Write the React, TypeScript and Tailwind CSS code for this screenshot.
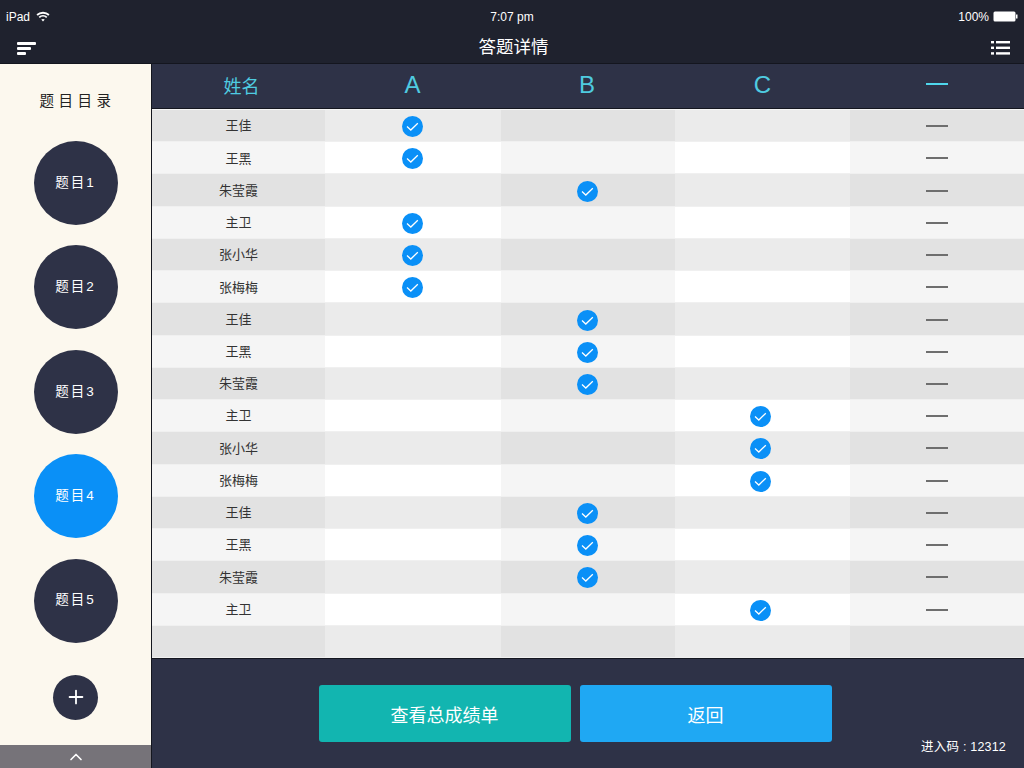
import { ChevronUp, Plus } from 'lucide-react';

const font = "[font-family:'Liberation_Sans','Noto_Sans_CJK_SC',sans-serif]";

// col: index of the answered column, 0 = A, 1 = B, 2 = C
const rows = [
  { name: '王佳', col: 0 },
  { name: '王黑', col: 0 },
  { name: '朱莹霞', col: 1 },
  { name: '主卫', col: 0 },
  { name: '张小华', col: 0 },
  { name: '张梅梅', col: 0 },
  { name: '王佳', col: 1 },
  { name: '王黑', col: 1 },
  { name: '朱莹霞', col: 1 },
  { name: '主卫', col: 2 },
  { name: '张小华', col: 2 },
  { name: '张梅梅', col: 2 },
  { name: '王佳', col: 1 },
  { name: '王黑', col: 1 },
  { name: '朱莹霞', col: 1 },
  { name: '主卫', col: 2 },
  { name: '', col: -1 },
];

const topics = ['题目1', '题目2', '题目3', '题目4', '题目5'];

function Check() {
  return (
    <svg width="21" height="21" viewBox="0 0 21 21">
      <circle cx="10.5" cy="10.5" r="10.5" fill="#0a90f7" />
      <path d="M5 10.6 L8.8 14 L15.8 7.2" fill="none" stroke="#fff" strokeWidth="1.3" />
    </svg>
  );
}

function Row({ name, col, index }: { name: string; col: number; index: number }) {
  const odd = index % 2 === 0;
  const dark = odd ? 'bg-[#e2e2e2]' : 'bg-[#f5f5f5]';
  const light = odd ? 'bg-[#ebebeb]' : 'bg-white';
  const base = 'flex items-center justify-center';
  return (
    <div className="grid grid-cols-[173px_176px_174px_175px_174px] border-b border-[#f0f0f0]">
      <div className={`${base} ${dark} pt-[1px] text-[13px] text-[#333333]`}>{name}</div>
      <div className={`${base} ${light} pt-[2px] pr-[2px]`}>{col === 0 && <Check />}</div>
      <div className={`${base} ${dark} pt-[2px] pr-[2px]`}>{col === 1 && <Check />}</div>
      <div className={`${base} ${light} pt-[2px] pr-[5px]`}>{col === 2 && <Check />}</div>
      <div className={`${base} ${dark} pt-[1px]`}>
        {name && <div className="h-[2px] w-[22px] bg-[#6e6e6e]" />}
      </div>
    </div>
  );
}

export default function App() {
  return (
    <div className={`flex h-[768px] w-[1024px] flex-col overflow-hidden bg-[#1f222e] ${font}`}>
      {/* Status bar */}
      <div className="grid h-[33px] grid-cols-3 items-center px-[6px] text-[12px] text-white">
        <div className="flex items-center gap-[6px]">
          <span>iPad</span>
          <svg width="14" height="11" viewBox="0 0 13 10" fill="none" stroke="#fff" strokeWidth="1.7">
            <path d="M1 3.6 C4 0.8 9 0.8 12 3.6" />
            <path d="M3 5.8 C5 4 8 4 10 5.8" />
            <path d="M6.5 9.6 L4.9 7.8 C5.8 7.1 7.2 7.1 8.1 7.8 Z" fill="#fff" stroke="none" />
          </svg>
        </div>
        <div className="text-center">7:07 pm</div>
        <div className="flex items-center justify-end gap-[4px]">
          <span>100%</span>
          <svg width="25" height="11" viewBox="0 0 25 11">
            <rect x="0.5" y="0.5" width="22" height="10" rx="1.5" fill="#fff" />
            <rect x="23" y="3.5" width="1.5" height="4" fill="#fff" />
          </svg>
        </div>
      </div>

      {/* Title bar */}
      <div className="flex h-[31px] items-start justify-between border-b border-[#14161f] pl-[17px] pr-[14px] text-white">
        <svg width="19" height="13" viewBox="0 0 19 13" fill="#fff" className="mt-[9px]">
          <rect x="0" y="0" width="19" height="3" rx="1" />
          <rect x="0" y="5" width="14" height="3" rx="1" />
          <rect x="0" y="10" width="9" height="3" rx="1" />
        </svg>
        <div className="text-[17.5px] leading-[28px]">答题详情</div>
        <svg width="19" height="14" viewBox="0 0 19 14" fill="#fff" className="mt-[8px]">
          <rect x="0" y="0" width="3" height="2.4" />
          <rect x="5" y="0" width="14" height="2.4" />
          <rect x="0" y="5.6" width="3" height="2.4" />
          <rect x="5" y="5.6" width="14" height="2.4" />
          <rect x="0" y="11.2" width="3" height="2.4" />
          <rect x="5" y="11.2" width="14" height="2.4" />
        </svg>
      </div>

      <div className="flex h-[704px]">
        {/* Sidebar */}
        <div className="flex w-[152px] flex-col items-center border-r border-[#14161f] bg-[#fcf8ee]">
          <div className="mt-[26px] mb-[29px] pl-[4px] text-[14.5px] leading-[22px] tracking-[4.5px] text-[#222222]">题目目录</div>
          <div className="flex flex-col gap-[20.4px]">
            {topics.map((t, i) => (
              <div
                key={t}
                className={`flex h-[84px] w-[84px] items-center justify-center rounded-full text-[13.5px] tracking-[2px] text-white ${
                  i === 3 ? 'bg-[#0a90f7]' : 'bg-[#2e3247]'
                }`}
              >
                {t}
              </div>
            ))}
          </div>
          <div className="mt-[32px] flex h-[45px] w-[45px] items-center justify-center rounded-full bg-[#2e3247]">
            <Plus size={22} color="#fff" strokeWidth={1.8} absoluteStrokeWidth />
          </div>
          <div className="mt-auto flex h-[23px] w-full items-center justify-center bg-[#767379]">
            <ChevronUp size={20} color="#fff" strokeWidth={2} />
          </div>
        </div>

        {/* Main */}
        <div className="flex w-[872px] flex-col">
          <div className="grid h-[45px] grid-cols-[173px_176px_174px_175px_174px] items-center border-b border-[#14161f] bg-[#2e3247] text-center text-[#4fcbe0]">
            <div className="pt-[2px] pl-[6px] text-[18px]">姓名</div>
            <div className="pr-[1px] pb-[3px] text-[24px] leading-[36px]">A</div>
            <div className="pr-[2px] pb-[3px] text-[24px] leading-[36px]">B</div>
            <div className="pb-[3px] text-[24px] leading-[36px]">C</div>
            <div className="flex justify-center pb-[4px]"><div className="h-[2px] w-[22px] bg-[#4fd6ec]" /></div>
          </div>
          <div className="grid h-[549px] grid-rows-[repeat(17,1fr)] border-t border-[#f5f5f5]">
            {rows.map((r, i) => (
              <Row key={i} name={r.name} col={r.col} index={i} />
            ))}
          </div>
          <div className="relative flex h-[110px] items-start justify-center gap-[9px] border-t border-[#14161f] bg-[#2e3247] pt-[26px] pr-[26px] text-[18px] leading-[63px] text-white">
            <button className="h-[57px] w-[252px] rounded-[3px] bg-[#12b5b0]">查看总成绩单</button>
            <button className="h-[57px] w-[252px] rounded-[3px] bg-[#1fa8f3]">返回</button>
            <div className="absolute right-[18px] bottom-[13px] text-[12.5px] leading-[16px] tracking-[0.2px]">进入码 : 12312</div>
          </div>
        </div>
      </div>
    </div>
  );
}
